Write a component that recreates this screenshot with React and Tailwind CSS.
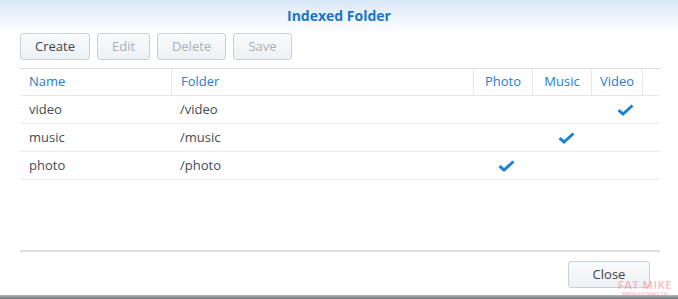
import { Fragment } from 'react';

const rows = [
  { name: 'video', folder: '/video', photo: false, music: false, video: true },
  { name: 'music', folder: '/music', photo: false, music: true, video: false },
  { name: 'photo', folder: '/photo', photo: true, music: false, video: false },
];

// checks in the screenshot sit a little right of the column centre
const checkShift = ['pl-[6px]', 'pl-[8px]', 'pl-[16px]'];

function Check() {
  return (
    <svg width="17" height="12" viewBox="0 0 17 12" className="block">
      <path d="M1.5 6.2 L6 10 L15.5 1.5" fill="none" stroke="#1e80d6" strokeWidth="3" strokeLinejoin="miter" />
    </svg>
  );
}

function Button({ children, disabled, className = '' }) {
  return (
    <button
      className={`h-[27px] rounded-[3px] border border-[#c9d0d7] bg-gradient-to-b from-[#f9fbfc] to-[#edf1f4] text-[13px] ${
        disabled ? 'text-[#a9b0b7]' : 'text-[#3b434b]'
      } ${className}`}
    >
      {children}
    </button>
  );
}

export default function App() {
  return (
    <div
      className="flex h-[299px] w-[678px] flex-col bg-white"
      style={{ fontFamily: '"Open Sans", "DejaVu Sans", sans-serif' }}
    >
      <div className="flex h-[33px] items-center justify-center pb-[2px] bg-gradient-to-b from-[#d8e8f7] to-white">
        <span className="text-[14px] font-bold text-[#1a74c6]">Indexed Folder</span>
      </div>

      <div className="flex gap-[7px] px-5">
        <Button className="w-[70px]">Create</Button>
        <Button disabled className="w-[53px]">Edit</Button>
        <Button disabled className="w-[69px]">Delete</Button>
        <Button disabled className="w-[59px]">Save</Button>
      </div>

      <div className="mx-5 mt-[8px] h-[182px] w-[640px] border-t border-[#dbdfe3] text-[13px]">
        <div className="grid grid-cols-[152px_302px_59px_59px_51px_17px]">
          {['Name', 'Folder', 'Photo', 'Music', 'Video', ''].map((h, i) => (
            <div
              key={i}
              className={`flex h-[27px] items-center border-b border-[#e5e8eb] text-[#2a7bcb] ${
                i < 5 ? 'border-r border-r-[#e5e8eb]' : ''
              } ${i < 2 ? 'pl-[9px]' : 'justify-center'}`}
            >
              {h}
            </div>
          ))}
          {rows.map((r) => (
            <Fragment key={r.name}>
              <div className="flex h-[28px] items-center border-b border-[#e8ebee] pl-[9px] text-[#434b53]">{r.name}</div>
              <div className="flex h-[28px] items-center border-b border-[#e8ebee] pl-[8px] text-[#434b53]">{r.folder}</div>
              {[r.photo, r.music, r.video].map((v, i) => (
                <div
                  key={i}
                  className={`flex h-[28px] items-center justify-center border-b border-[#e8ebee] pt-[1px] ${checkShift[i]}`}
                >
                  {v && <Check />}
                </div>
              ))}
              <div className="h-[28px] border-b border-[#e8ebee]" />
            </Fragment>
          ))}
        </div>
      </div>

      <div className="mx-5 w-[640px] border-t-2 border-[#dcdfe2]" />

      <div className="relative flex flex-1 justify-end pr-[28px] pt-[9px]">
        <Button className="w-[82px]">Close</Button>
        <div className="pointer-events-none absolute right-[6px] top-[27px] flex flex-col items-center text-[#f27c8c] opacity-45">
          <span className="text-[11px] font-bold leading-[11px] tracking-[0.5px]">FAT MIKE</span>
          <span className="mt-[2px] text-[5px] font-bold leading-[5px]">WWW.FATMIKE.CN</span>
        </div>
      </div>

      <div className="h-[4px] bg-gradient-to-b from-[#b9bcbf] to-[#6f7275]" />
    </div>
  );
}
